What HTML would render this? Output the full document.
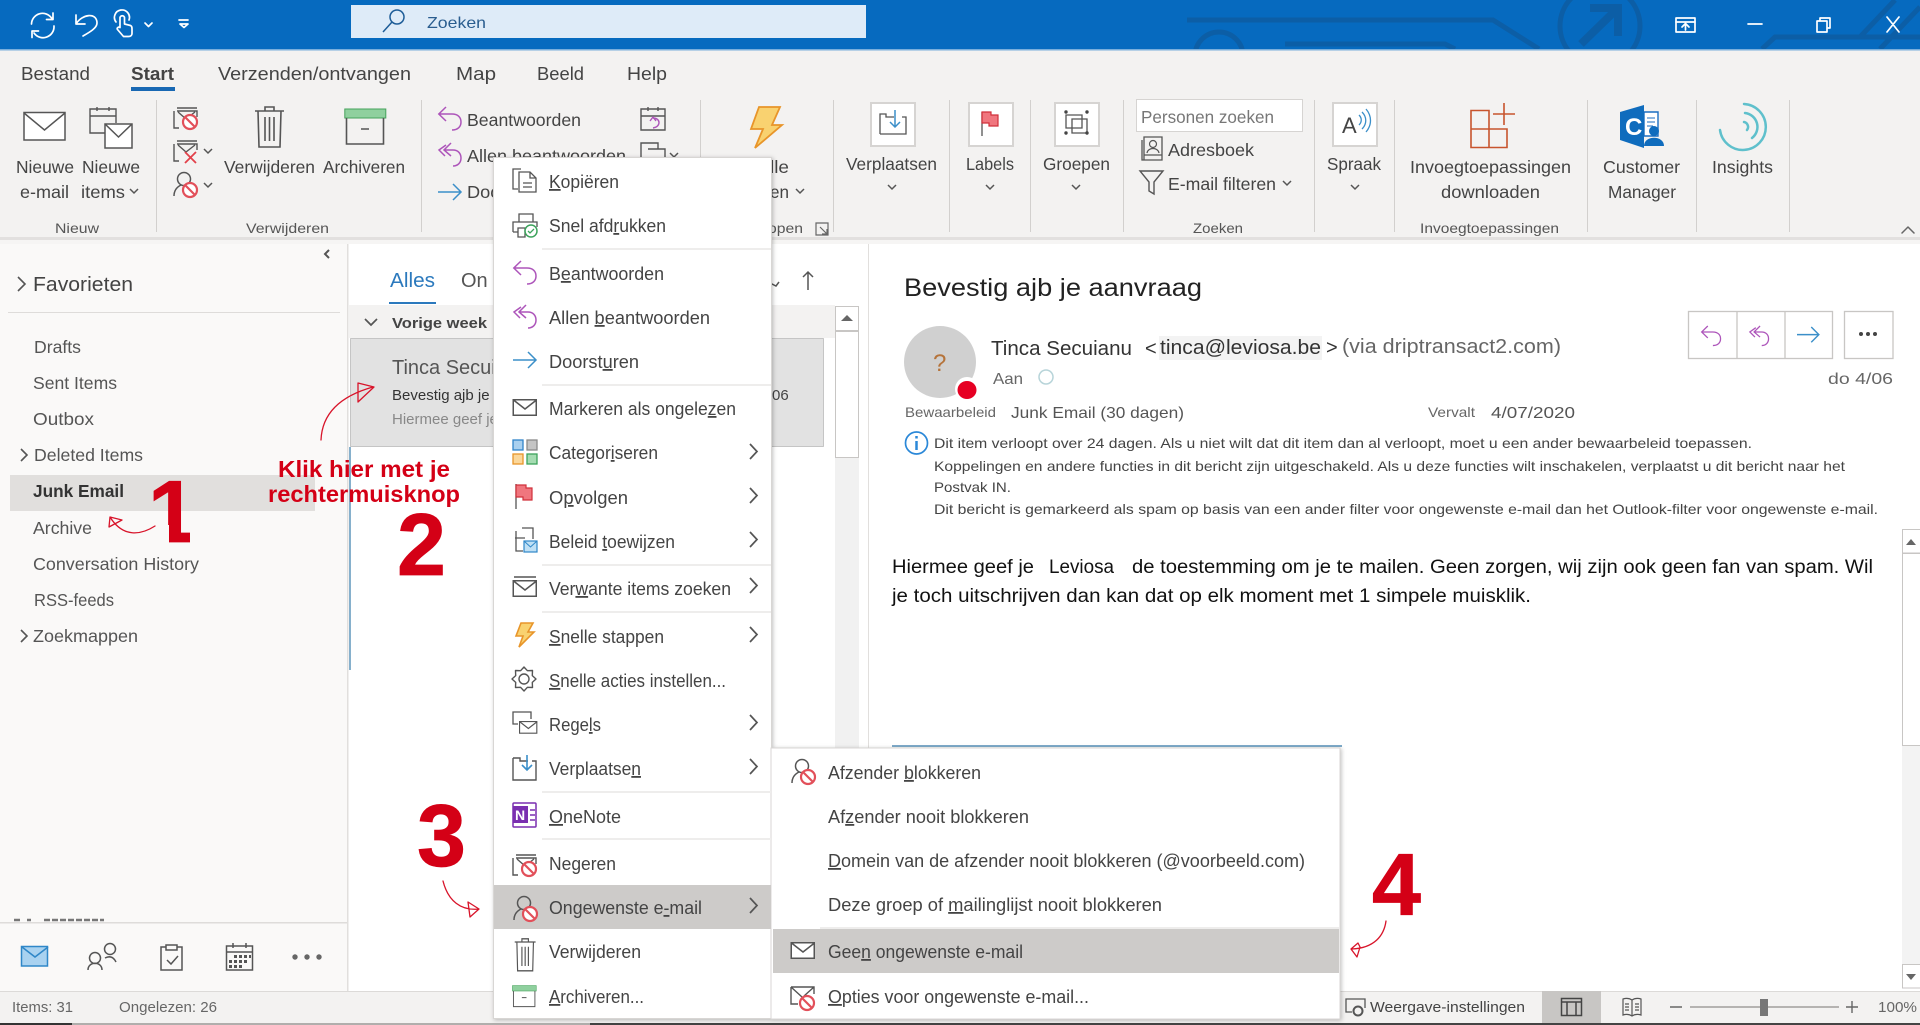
<!DOCTYPE html>
<html lang="nl"><head><meta charset="utf-8"><title>Outlook</title>
<style>
html,body{margin:0;padding:0;background:#fff;width:1920px;height:1025px;overflow:hidden}
svg{display:block;font-family:"Liberation Sans",sans-serif}
.r{font-size:17.5px;fill:#444}
.t{font-size:18px;fill:#444}
.g{font-size:14px;fill:#555}
.f{font-size:17.5px;fill:#555}
.m{font-size:18px;fill:#444}
.i{font-size:14px;fill:#444}
.s{font-size:15px;fill:#666}
.n{font-size:88px;font-weight:bold;fill:#d40016;stroke:#d40016;stroke-width:.8}
.k{font-size:23px;font-weight:bold;fill:#d40016}
.u{text-decoration:underline}
.ln{fill:none;stroke:#555;stroke-width:1.5}
.w{fill:none;stroke:#fff;stroke-width:1.7;stroke-linecap:round;stroke-linejoin:round}
.c{fill:none;stroke:#666;stroke-width:1.5;stroke-linecap:round;stroke-linejoin:round}
.ar{fill:none;stroke:#d8142a;stroke-width:1.3;stroke-linecap:round;stroke-linejoin:round}
</style></head><body>
<svg xmlns="http://www.w3.org/2000/svg" width="1920" height="1025" viewBox="0 0 1920 1025">
<defs>
<clipPath id="one"><path d="M140 470H190V545H169V525H140z"/></clipPath>
<g id="no"><circle cx="0" cy="0" r="7" fill="#fff" stroke="#e2505a" stroke-width="2.2"/><path d="M-5-5L5 5" stroke="#e2505a" stroke-width="2.2"/></g>
<g id="env"><rect x=".75" y=".75" width="23" height="15.5" fill="#fff" stroke="#555" stroke-width="1.5"/><path d="M1 1l11.5 9L24 1" fill="none" stroke="#555" stroke-width="1.5"/></g>
<g id="ignore"><path d="M4 2h20M1 5v17h5M4 5h20v6M5 6l8 7 9-7" fill="none" stroke="#555" stroke-width="1.4"/><use href="#no" x="17" y="16"/></g>
<g id="person"><circle cx="11" cy="8" r="6.5" fill="none" stroke="#555" stroke-width="1.5"/><path d="M1 25c0-6 3-9 7-11M14 14l3 2" fill="none" stroke="#555" stroke-width="1.5"/><use href="#no" x="17" y="19"/></g>
<g id="reply"><path d="M8 0L.8 7l7.2 7M1 7h13c6 0 9 3.5 9 8s-3 8-9 8" fill="none" stroke="#ad55ba" stroke-width="1.5"/></g>
<g id="replyall"><path d="M8 2L1 7l6 6M13 0L6 7l7 6M6 7h9c5 0 8 3.500 8 8s-3 8-8 8" fill="none" stroke="#ad55ba" stroke-width="1.5"/></g>
<g id="fwd"><path d="M0 8h23M15 0l8 8-8 8" fill="none" stroke="#3b8fc9" stroke-width="1.5"/></g>
<g id="trash"><path d="M1 5h29M11 5V1h9v4M4 5l1 36h21l1-36M11 11v24M15.500 11v24M20 11v24" fill="none" stroke="#555" stroke-width="1.6"/></g>
<g id="arch"><rect x=".8" y="1" width="41" height="9" fill="#8fd09e" stroke="#46a35c"/><path d="M2.500 10v26h37V10M17 21h8" fill="none" stroke="#555" stroke-width="1.6"/></g>
<g id="chv"><path d="M0 0l4 4 4-4" fill="none" stroke="#555" stroke-width="1.5"/></g>
<g id="chr"><path d="M0 0l7 7.500-7 7.500" fill="none" stroke="#555" stroke-width="1.7"/></g>
</defs>

<!-- title bar -->
<rect width="1920" height="49" fill="#066abf"/>
<g fill="none" stroke="#0c5ea6" stroke-width="5">
<path d="M1187 20H1456L1493 20 1539 49"/>
<circle cx="1600" cy="26" r="40"/>
<path d="M1581 44L1618 8M1590 8h28v28" stroke-width="8"/>
<circle cx="1219" cy="56" r="24"/>
<path d="M1285 44H1445L1455 49"/>
<path d="M1762 49L1775 37H1920M1860 37L1895 0M1880 49L1920 7"/>
</g>
<rect x="0" y="49" width="1920" height="1.500" fill="#79aedc"/>
<rect x="351" y="5" width="515" height="33" fill="#deebf8"/>
<circle cx="397" cy="17" r="7" fill="none" stroke="#1d5c97" stroke-width="1.5"/><path d="M392 22L383 32" stroke="#1d5c97" stroke-width="1.5"/>
<text x="427" y="28" font-size="16" fill="#2a5d8f" textLength="59" lengthAdjust="spacingAndGlyphs">Zoeken</text>
<path class="w" d="M31.500 24a11 11 0 0 1 20-6M53 13v6.500h-6.500M54 26a11 11 0 0 1-20 7M32 37.500V31h6.500"/>
<path class="w" d="M76 15v9h9M76 24c6-10 21-12 21-1 0 5-7 9-14 13"/>
<path class="w" d="M120 27V18a2.200 2.200 0 0 1 4.500 0v6l6 1.500c1.500.5 1.500 2 1.500 4v4c0 2-1.500 3-3.500 3h-5l-6-7c-1-1.500 1-3 2.500-2zM116 22a7.500 7.500 0 1 1 13-2"/>
<path class="w" d="M145 23l3.500 3.500 3.500-3.500"/>
<path class="w" d="M179 20h9M180 24l4 3.500 4-3.500h-8"/>
<g class="w" fill="none"><rect x="1676" y="18" width="19" height="14"/><path d="M1676 22h19M1685.500 30v-6M1682 27l3.500-3.500 3.500 3.500"/><path d="M1748 24h14M1817 21h10v11h-10zM1820 21v-3h10v10h-3M1887 17l12 15M1899 17l-12 15"/></g>

<!-- ribbon -->
<rect y="50.500" width="1920" height="187" fill="#f3f2f1"/>
<rect y="237" width="1920" height="3" fill="#e2e0df"/><rect y="240" width="1920" height="4" fill="#f6f5f4"/>
<text x="21" y="80" class="t" textLength="69" lengthAdjust="spacingAndGlyphs">Bestand</text>
<text x="131" y="80" class="t" font-weight="bold" style="font-weight:600" textLength="43" lengthAdjust="spacingAndGlyphs">Start</text>
<rect x="131" y="87" width="44" height="4" fill="#1868b3"/>
<text x="218" y="80" class="t" textLength="193" lengthAdjust="spacingAndGlyphs">Verzenden/ontvangen</text>
<text x="456" y="80" class="t" textLength="40" lengthAdjust="spacingAndGlyphs">Map</text>
<text x="537" y="80" class="t" textLength="47" lengthAdjust="spacingAndGlyphs">Beeld</text>
<text x="627" y="80" class="t" textLength="40" lengthAdjust="spacingAndGlyphs">Help</text>
<g fill="#d2d0ce"><rect x="156" y="100" width="1" height="132"/><rect x="421" y="100" width="1" height="132"/><rect x="700" y="100" width="1" height="132"/><rect x="833" y="100" width="1" height="132"/><rect x="949" y="100" width="1" height="132"/><rect x="1030" y="100" width="1" height="132"/><rect x="1123" y="100" width="1" height="132"/><rect x="1314" y="100" width="1" height="132"/><rect x="1394" y="100" width="1" height="132"/><rect x="1587" y="100" width="1" height="132"/><rect x="1696" y="100" width="1" height="132"/><rect x="1789" y="100" width="1" height="132"/></g>

<!-- nieuw -->
<rect x="24" y="112.500" width="41" height="27.500" fill="#fff" stroke="#555" stroke-width="1.500"/><path d="M24 113l20.500 17L65 113" fill="none" stroke="#555" stroke-width="1.500"/>
<path d="M105 133H90V109h26v14M90 116h26M97 107v4M109 107v4" fill="none" stroke="#555" stroke-width="1.400"/>
<rect x="105" y="124" width="27" height="24" fill="#fff" stroke="#555" stroke-width="1.500"/><path d="M105 124l13.500 13L132 124" fill="none" stroke="#555" stroke-width="1.500"/>
<text x="16" y="173" class="r" textLength="58" lengthAdjust="spacingAndGlyphs">Nieuwe</text><text x="20" y="198" class="r" textLength="49" lengthAdjust="spacingAndGlyphs">e-mail</text>
<text x="82" y="173" class="r" textLength="58" lengthAdjust="spacingAndGlyphs">Nieuwe</text><text x="81" y="198" class="r" textLength="44" lengthAdjust="spacingAndGlyphs">items</text>
<use href="#chv" x="130" y="189"/>
<text x="55" y="233" class="g" textLength="44" lengthAdjust="spacingAndGlyphs">Nieuw</text>
<!-- verwijderen -->
<use href="#ignore" x="173" y="106"/>
<g transform="translate(173 139)"><path d="M4 2h20M1 5v17h5M4 5h20v6M5 6l8 7 9-7" fill="none" stroke="#555" stroke-width="1.400"/><path d="M12 13l11 11M23 13L12 24" stroke="#e2404a" stroke-width="1.800"/></g>
<use href="#chv" x="204" y="149"/>
<use href="#person" x="173" y="171"/>
<use href="#chv" x="204" y="183"/>
<use href="#trash" x="254" y="106"/>
<use href="#arch" x="344" y="108"/>
<text x="224" y="173" class="r" textLength="91" lengthAdjust="spacingAndGlyphs">Verwijderen</text>
<text x="323" y="173" class="r" textLength="82" lengthAdjust="spacingAndGlyphs">Archiveren</text>
<text x="246" y="233" class="g" textLength="83" lengthAdjust="spacingAndGlyphs">Verwijderen</text>
<!-- reageren -->
<use href="#reply" x="438" y="107"/>
<use href="#replyall" x="438" y="143"/>
<use href="#fwd" x="438" y="184"/>
<text x="467" y="126" class="r" textLength="114" lengthAdjust="spacingAndGlyphs">Beantwoorden</text>
<text x="467" y="162" class="r" textLength="159" lengthAdjust="spacingAndGlyphs">Allen beantwoorden</text>
<text x="467" y="198" class="r" textLength="90" lengthAdjust="spacingAndGlyphs">Doorsturen</text>
<path d="M641 130V109h24v21zM641 116h24M648 107v4M658 107v4" fill="none" stroke="#555" stroke-width="1.400"/>
<path d="M650 121l3-4 3 4M653 118c8 0 8 9 0 10" fill="none" stroke="#ad55ba" stroke-width="1.400"/>
<path d="M641 160v-17h17v6M648 149h17v12" fill="none" stroke="#555" stroke-width="1.400"/>
<use href="#chv" x="670" y="153"/>
<!-- snelle stappen -->
<path d="M759 107h21l-8 18h10l-27 23 8-19h-12z" fill="#f9d270" stroke="#e8952a" stroke-width="1.800"/>
<text x="770" y="173" class="r" textLength="19" lengthAdjust="spacingAndGlyphs">lle</text>
<text x="770" y="198" class="r" textLength="19" lengthAdjust="spacingAndGlyphs">en</text>
<use href="#chv" x="796" y="189"/>
<text x="768" y="233" class="g" textLength="35" lengthAdjust="spacingAndGlyphs">open</text>
<path d="M816 223h12v12h-12zM820 227l7 7M827 229v5h-5" fill="none" stroke="#666" stroke-width="1.200"/>
<!-- verplaatsen/labels/groepen -->
<g fill="#fff" stroke="#d6d4d2" stroke-width="2"><rect x="871" y="103" width="44" height="43"/><rect x="969" y="103" width="44" height="43"/><rect x="1055" y="103" width="44" height="43"/><rect x="1333" y="103" width="44" height="43"/></g>
<path d="M880 134v-20h6v3h8M902 117h4v17H880" fill="none" stroke="#555" stroke-width="1.300"/><path d="M895 110v17M890 122l5 5 5-5" fill="none" stroke="#3b8fc9" stroke-width="1.500"/>
<text x="846" y="170" class="r" textLength="91" lengthAdjust="spacingAndGlyphs">Verplaatsen</text><use href="#chv" x="888" y="185"/>
<path d="M982 112v24" stroke="#555" stroke-width="1.300"/><path d="M982 112h9v3h7v11h-9v-3h-7z" fill="#f0767e" stroke="#d0313b" stroke-width="1.200"/>
<text x="966" y="170" class="r" textLength="48" lengthAdjust="spacingAndGlyphs">Labels</text><use href="#chv" x="986" y="185"/>
<path d="M1066 115h16v13h-16zM1072 119h15v14h-15z" fill="none" stroke="#555" stroke-width="1.300"/>
<g fill="#444"><circle cx="1066" cy="112" r="1.700"/><circle cx="1087" cy="112" r="1.700"/><circle cx="1066" cy="133" r="1.700"/><circle cx="1087" cy="133" r="1.700"/></g>
<text x="1043" y="170" class="r" textLength="67" lengthAdjust="spacingAndGlyphs">Groepen</text><use href="#chv" x="1072" y="185"/>
<!-- zoeken -->
<rect x="1136.500" y="99.500" width="166" height="32" fill="#fff" stroke="#d6d4d2"/>
<text x="1141" y="123" class="r" style="fill:#777" textLength="133" lengthAdjust="spacingAndGlyphs">Personen zoeken</text>
<path d="M1144 137h18v23h-18zM1144 155h18M1142 140v20h2" fill="none" stroke="#555" stroke-width="1.300"/><circle cx="1153" cy="144" r="3.500" fill="none" stroke="#555" stroke-width="1.200"/><path d="M1147 153c1-6 11-6 12 0" fill="none" stroke="#555" stroke-width="1.200"/>
<text x="1168" y="156" class="r" textLength="86" lengthAdjust="spacingAndGlyphs">Adresboek</text>
<path d="M1140 171h23l-9 11v12l-5-3v-9z" fill="none" stroke="#555" stroke-width="1.400"/>
<text x="1168" y="190" class="r" textLength="108" lengthAdjust="spacingAndGlyphs">E-mail filteren</text><use href="#chv" x="1283" y="181"/>
<text x="1193" y="233" class="g" textLength="50" lengthAdjust="spacingAndGlyphs">Zoeken</text>
<text x="1342" y="133" font-size="22" fill="#444">A</text><path d="M1359 114c3 3 3 7 0 10M1362 111c5 5 5 12 0 17M1366 108c6 7 6 16 0 23" transform="translate(0 1)" fill="none" stroke="#3b8fc9" stroke-width="1.300"/>
<text x="1327" y="170" class="r" textLength="54" lengthAdjust="spacingAndGlyphs">Spraak</text><use href="#chv" x="1351" y="185"/>
<!-- invoeg -->
<path d="M1471 110.500h18v37h-18zM1471 129h36v18.500h-18M1507 129v18.500M1489 129v18.500M1493 114h22M1504 103v22" fill="none" stroke="#c8542d" stroke-width="1.600"/>
<text x="1410" y="173" class="r" textLength="161" lengthAdjust="spacingAndGlyphs">Invoegtoepassingen</text>
<text x="1441" y="198" class="r" textLength="99" lengthAdjust="spacingAndGlyphs">downloaden</text>
<text x="1420" y="233" class="g" textLength="139" lengthAdjust="spacingAndGlyphs">Invoegtoepassingen</text>
<!-- customer manager -->
<path d="M1644 112h14v24h-14z" fill="#fff" stroke="#1b6ec2" stroke-width="1.400"/><path d="M1647 118h8M1647 122h8M1647 126h6" stroke="#1b6ec2"/>
<path d="M1620 112l24-7v43l-24-8z" fill="#0f6cbd"/><text x="1625" y="135" font-size="24" font-weight="bold" fill="#fff">C</text>
<circle cx="1654" cy="131" r="5" fill="#0f6cbd"/><path d="M1644 146c0-11 20-11 20 0z" fill="#0f6cbd"/>
<text x="1603" y="173" class="r" textLength="77" lengthAdjust="spacingAndGlyphs">Customer</text>
<text x="1608" y="198" class="r" textLength="68" lengthAdjust="spacingAndGlyphs">Manager</text>
<!-- insights -->
<path d="M1744 104a23 23 0 1 1-24 26M1745 113a14 14 0 0 1 7 25M1744 122a5 5 0 0 1 3 8" fill="none" stroke="#5fc0cc" stroke-width="2.500" stroke-linecap="round"/>
<text x="1712" y="173" class="r" textLength="61" lengthAdjust="spacingAndGlyphs">Insights</text>
<path class="c" d="M1902 233l6-6 6 6"/>

<!-- sidebar -->
<rect x="0" y="244" width="347" height="747" fill="#faf9f8"/>
<rect x="347" y="244" width="1.500" height="747" fill="#e1dfdd"/>
<path d="M329 250l-4 4 4 4" fill="none" stroke="#555" stroke-width="2"/>
<path d="M18 277l7 7-7 7" fill="none" stroke="#555" stroke-width="1.600"/>
<text x="33" y="291" font-size="20" fill="#444" textLength="100" lengthAdjust="spacingAndGlyphs">Favorieten</text>
<rect x="8" y="312" width="332" height="1" fill="#dedcda"/>
<rect x="10" y="475" width="305" height="36" fill="#e1dfdd"/>
<text x="34" y="353" class="f" textLength="47" lengthAdjust="spacingAndGlyphs">Drafts</text>
<text x="33" y="389" class="f" textLength="84" lengthAdjust="spacingAndGlyphs">Sent Items</text>
<text x="33" y="425" class="f" textLength="61" lengthAdjust="spacingAndGlyphs">Outbox</text>
<text x="34" y="461" class="f" textLength="109" lengthAdjust="spacingAndGlyphs">Deleted Items</text>
<text x="33" y="497" class="f" font-weight="bold" style="fill:#333" textLength="91" lengthAdjust="spacingAndGlyphs">Junk Email</text>
<text x="33" y="534" class="f" textLength="59" lengthAdjust="spacingAndGlyphs">Archive</text>
<text x="33" y="570" class="f" textLength="166" lengthAdjust="spacingAndGlyphs">Conversation History</text>
<text x="34" y="606" class="f" textLength="80" lengthAdjust="spacingAndGlyphs">RSS-feeds</text>
<text x="33" y="642" class="f" textLength="105" lengthAdjust="spacingAndGlyphs">Zoekmappen</text>
<path d="M21 449l6 6-6 6M21 630l6 6-6 6" fill="none" stroke="#555" stroke-width="1.600"/>
<path d="M14 920h7M27 920h4M44 920h60" stroke="#777" stroke-width="2.500" stroke-dasharray="6 2"/>
<rect x="0" y="922" width="347" height="1.500" fill="#dedcda"/>
<rect x="21.500" y="946.500" width="26" height="19.500" fill="#a9d2f0" stroke="#2f87c8" stroke-width="1.500"/><path d="M22 947l13 10 13-10" fill="none" stroke="#2f87c8" stroke-width="1.500"/>
<g fill="none" stroke="#555" stroke-width="1.500"><circle cx="95" cy="958" r="5.500"/><path d="M88 970c0-9 14-9 14 0"/><circle cx="110" cy="949" r="5.500"/><path d="M105 958c4-2 8-2 11 4"/>
<path d="M166 947h-5v23h21v-23h-5M166 945h11v5h-11zM167 960l4 4 7-8"/>
<rect x="226.500" y="946" width="26" height="24" /><path d="M227 952h26M233 943v5M246 943v5"/></g>
<g fill="#555"><rect x="234" y="955" width="3" height="3"/><rect x="239" y="955" width="3" height="3"/><rect x="244" y="955" width="3" height="3"/><rect x="249" y="955" width="2" height="3"/><rect x="234" y="960" width="3" height="3"/><rect x="239" y="960" width="3" height="3"/><rect x="244" y="960" width="3" height="3"/><rect x="229" y="960" width="3" height="3"/><rect x="229" y="965" width="3" height="3"/><rect x="234" y="965" width="3" height="3"/><rect x="239" y="965" width="3" height="3"/></g>
<g fill="#666"><circle cx="295" cy="957" r="2.700"/><circle cx="307" cy="957" r="2.700"/><circle cx="319" cy="957" r="2.700"/></g>

<!-- mail list -->
<rect x="868" y="244" width="1" height="747" fill="#e1dfdd"/>
<text x="390" y="287" font-size="20" fill="#2b79bd" textLength="45" lengthAdjust="spacingAndGlyphs">Alles</text>
<rect x="389" y="302" width="47" height="2" fill="#2b79bd"/>
<text x="461" y="287" font-size="20" fill="#555">On</text>
<rect x="349" y="305" width="486" height="33" fill="#f3f2f1"/>
<path d="M365 319l6 6 6-6" fill="none" stroke="#555" stroke-width="1.700"/>
<text x="392" y="328" font-size="15" font-weight="bold" fill="#444" textLength="95" lengthAdjust="spacingAndGlyphs">Vorige week</text>
<rect x="350.500" y="338.500" width="473" height="108" fill="#e2e2e2" stroke="#999" stroke-dasharray="1 1"/>
<text x="392" y="374" font-size="20" fill="#555">Tinca Secuianu</text>
<text x="392" y="400" font-size="15" fill="#333">Bevestig ajb je aanvraag</text>
<text x="392" y="424" font-size="15" fill="#888">Hiermee geef je</text>
<text x="772" y="400" font-size="15" fill="#444">06</text>
<rect x="349" y="447" width="2" height="223" fill="#86b0cc"/>
<path d="M770 283l6 3 3-4" fill="none" stroke="#555" stroke-width="1.500"/>
<path d="M808 290v-18M803 277l5-5 5 5" fill="none" stroke="#555" stroke-width="1.500"/>
<rect x="835" y="306" width="24" height="685" fill="#f1f1f1"/>
<rect x="835.500" y="306.500" width="23" height="24" fill="#fff" stroke="#c8c6c4"/><path d="M841 321l6-6 6 6z" fill="#666"/>
<rect x="835.500" y="331.500" width="23" height="126" fill="#fff" stroke="#c8c6c4"/>

<!-- reading pane -->
<text x="904" y="296" font-size="25" fill="#222" textLength="298" lengthAdjust="spacingAndGlyphs">Bevestig ajb je aanvraag</text>
<circle cx="940" cy="362" r="36" fill="#d0d0d0"/>
<text x="933" y="371" font-size="24" fill="#b5733a">?</text>
<circle cx="967" cy="389" r="12" fill="#fff"/><ellipse cx="967" cy="390" rx="9.500" ry="9" fill="#e60023"/>
<rect x="1159" y="336" width="163" height="24" fill="#f3f3f3"/>
<text x="991" y="355" font-size="20" fill="#333" textLength="141" lengthAdjust="spacingAndGlyphs">Tinca Secuianu</text>
<text x="1145" y="355" font-size="20" fill="#333">&lt;</text>
<text x="1160" y="354" font-size="20" fill="#333" textLength="161" lengthAdjust="spacingAndGlyphs">tinca@leviosa.be</text>
<text x="1326" y="354" font-size="20" fill="#333">&gt;</text>
<text x="1342" y="353" font-size="20" fill="#666" textLength="219" lengthAdjust="spacingAndGlyphs">(via driptransact2.com)</text>
<text x="993" y="384" font-size="16" fill="#666" textLength="30" lengthAdjust="spacingAndGlyphs">Aan</text>
<circle cx="1046" cy="377" r="7" fill="none" stroke="#b7d4d9" stroke-width="1.500"/>
<g fill="#fff" stroke="#c8c6c4" stroke-width="1.300"><rect x="1688.500" y="311.500" width="144" height="47"/><path d="M1737 311v48M1785 311v48" fill="none"/><rect x="1844.500" y="311.500" width="48.500" height="47"/></g>
<g transform="translate(1701 326) scale(.85)"><use href="#reply"/></g>
<g transform="translate(1749 326) scale(.85)"><use href="#replyall"/></g>
<g transform="translate(1797 327) scale(.95)"><use href="#fwd"/></g>
<g fill="#444"><circle cx="1861" cy="334" r="2"/><circle cx="1868" cy="334" r="2"/><circle cx="1875" cy="334" r="2"/></g>
<text x="1828" y="384" font-size="16" fill="#666" textLength="65" lengthAdjust="spacingAndGlyphs">do 4/06</text>
<text x="905" y="417" font-size="14" fill="#666" textLength="91" lengthAdjust="spacingAndGlyphs">Bewaarbeleid</text>
<text x="1011" y="418" font-size="16" fill="#555" textLength="173" lengthAdjust="spacingAndGlyphs">Junk Email (30 dagen)</text>
<text x="1428" y="417" font-size="14" fill="#666" textLength="47" lengthAdjust="spacingAndGlyphs">Vervalt</text>
<text x="1491" y="418" font-size="16" fill="#555" textLength="84" lengthAdjust="spacingAndGlyphs">4/07/2020</text>
<circle cx="916.500" cy="443" r="11" fill="none" stroke="#2b88d8" stroke-width="1.700"/><path d="M916.500 441v9M916.500 436v2.500" stroke="#2b88d8" stroke-width="2.500"/>
<text x="934" y="448" class="i" textLength="818" lengthAdjust="spacingAndGlyphs">Dit item verloopt over 24 dagen. Als u niet wilt dat dit item dan al verloopt, moet u een ander bewaarbeleid toepassen.</text>
<text x="934" y="471" class="i" textLength="911" lengthAdjust="spacingAndGlyphs">Koppelingen en andere functies in dit bericht zijn uitgeschakeld. Als u deze functies wilt inschakelen, verplaatst u dit bericht naar het</text>
<text x="934" y="492" class="i" textLength="77" lengthAdjust="spacingAndGlyphs">Postvak IN.</text>
<text x="934" y="514" class="i" textLength="944" lengthAdjust="spacingAndGlyphs">Dit bericht is gemarkeerd als spam op basis van een ander filter voor ongewenste e-mail dan het Outlook-filter voor ongewenste e-mail.</text>
<text x="892" y="573" font-size="19" fill="#111" textLength="142" lengthAdjust="spacingAndGlyphs">Hiermee geef je</text>
<text x="1049" y="573" font-size="19" fill="#111" textLength="65" lengthAdjust="spacingAndGlyphs">Leviosa</text>
<text x="1132" y="573" font-size="19" fill="#111" textLength="741" lengthAdjust="spacingAndGlyphs">de toestemming om je te mailen. Geen zorgen, wij zijn ook geen fan van spam. Wil</text>
<text x="892" y="602" font-size="19" fill="#111" textLength="639" lengthAdjust="spacingAndGlyphs">je toch uitschrijven dan kan dat op elk moment met 1 simpele muisklik.</text>
<rect x="1902" y="529" width="18" height="459" fill="#f3f3f3"/>
<rect x="1902.500" y="529.500" width="18" height="23.500" fill="#fff" stroke="#c8c6c4"/><path d="M1906 545l5-6 5 6z" fill="#666"/>
<rect x="1902.500" y="553.500" width="18" height="192" fill="#fff" stroke="#c8c6c4"/>
<rect x="1902.500" y="964.500" width="18" height="23.500" fill="#fff" stroke="#c8c6c4"/><path d="M1906 974l5 6 5-6z" fill="#666"/>
<rect x="892" y="745" width="450" height="2" fill="#7eabca"/>

<!-- status bar -->
<rect y="991" width="1920" height="32" fill="#f3f2f1"/><rect y="991" width="1920" height="1" fill="#dcdad8"/>
<rect y="1023" width="1920" height="2" fill="#b0aeac"/><rect y="1023" width="72" height="2" fill="#333"/><rect x="590" y="1023" width="1330" height="2" fill="#444"/>
<text x="12" y="1012" class="s" textLength="61" lengthAdjust="spacingAndGlyphs">Items: 31</text>
<text x="119" y="1012" class="s" textLength="98" lengthAdjust="spacingAndGlyphs">Ongelezen: 26</text>
<path d="M1352 1012h-6v-13h19v9" fill="none" stroke="#555" stroke-width="1.300"/><circle cx="1358" cy="1011" r="4.500" fill="none" stroke="#555" stroke-width="2"/>
<text x="1370" y="1012" class="s" style="fill:#444" textLength="155" lengthAdjust="spacingAndGlyphs">Weergave-instellingen</text>
<rect x="1542" y="991" width="59" height="32" fill="#c8c6c4"/>
<path d="M1561.500 998.500h20v17h-20zM1561.500 1002h20M1567 1002v13M1576 1002v13" fill="none" stroke="#444" stroke-width="1.500"/>
<path d="M1632 1000c-3-2-6-2-9-1v16c3-1 6-1 9 1 3-2 6-2 9-1v-16c-3-1-6-1-9 1zM1632 1000v16M1625 1004h4M1625 1007h4M1625 1010h4M1635 1004h4M1635 1007h4M1635 1010h4" fill="none" stroke="#555" stroke-width="1.200"/>
<path d="M1670 1007h12M1846 1007h12M1852 1001v12" stroke="#666" stroke-width="1.400"/>
<rect x="1690" y="1006" width="149" height="2" fill="#b5b3b1"/><rect x="1760" y="999" width="8" height="17" fill="#777"/>
<text x="1878" y="1012" class="s" textLength="39" lengthAdjust="spacingAndGlyphs">100%</text>

<!-- context menu -->
<g style="filter:drop-shadow(1px 1px 2px rgba(0,0,0,.25))">
<rect x="493.500" y="157.500" width="278" height="861" fill="#fff" stroke="#d8d6d4"/>
<rect x="771" y="748" width="569" height="271" fill="#fff" stroke="#d8d6d4"/>
</g>
<g fill="#eeedec"><rect x="542" y="248" width="229" height="2"/><rect x="542" y="384" width="229" height="2"/><rect x="542" y="564" width="229" height="2"/><rect x="542" y="611" width="229" height="2"/><rect x="542" y="791" width="229" height="2"/><rect x="542" y="838" width="229" height="2"/><rect x="820" y="927" width="519" height="2"/></g>
<rect x="494" y="885" width="277" height="44" fill="#cdcbc9"/>
<rect x="773" y="929" width="566" height="44" fill="#cdcbc9"/>

<text x="549" y="188" class="m" textLength="70" lengthAdjust="spacingAndGlyphs"><tspan class="u">K</tspan>opiëren</text>
<text x="549" y="232" class="m" textLength="117" lengthAdjust="spacingAndGlyphs">Snel afd<tspan class="u">r</tspan>ukken</text>
<text x="549" y="280" class="m" textLength="115" lengthAdjust="spacingAndGlyphs">B<tspan class="u">e</tspan>antwoorden</text>
<text x="549" y="324" class="m" textLength="161" lengthAdjust="spacingAndGlyphs">Allen <tspan class="u">b</tspan>eantwoorden</text>
<text x="549" y="368" class="m" textLength="90" lengthAdjust="spacingAndGlyphs">Doorst<tspan class="u">u</tspan>ren</text>
<text x="549" y="415" class="m" textLength="187" lengthAdjust="spacingAndGlyphs">Markeren als ongele<tspan class="u">z</tspan>en</text>
<text x="549" y="459" class="m" textLength="109" lengthAdjust="spacingAndGlyphs">Categor<tspan class="u">i</tspan>seren</text>
<text x="549" y="504" class="m" textLength="79" lengthAdjust="spacingAndGlyphs">O<tspan class="u">p</tspan>volgen</text>
<text x="549" y="548" class="m" textLength="126" lengthAdjust="spacingAndGlyphs">Beleid <tspan class="u">t</tspan>oewijzen</text>
<text x="549" y="595" class="m" textLength="182" lengthAdjust="spacingAndGlyphs">Ver<tspan class="u">w</tspan>ante items zoeken</text>
<text x="549" y="643" class="m" textLength="115" lengthAdjust="spacingAndGlyphs"><tspan class="u">S</tspan>nelle stappen</text>
<text x="549" y="687" class="m" textLength="177" lengthAdjust="spacingAndGlyphs"><tspan class="u">S</tspan>nelle acties instellen...</text>
<text x="549" y="731" class="m" textLength="52" lengthAdjust="spacingAndGlyphs">Rege<tspan class="u">l</tspan>s</text>
<text x="549" y="775" class="m" textLength="92" lengthAdjust="spacingAndGlyphs">Verplaatse<tspan class="u">n</tspan></text>
<text x="549" y="823" class="m" textLength="72" lengthAdjust="spacingAndGlyphs"><tspan class="u">O</tspan>neNote</text>
<text x="549" y="870" class="m" textLength="67" lengthAdjust="spacingAndGlyphs">Ne<tspan class="u">g</tspan>eren</text>
<text x="549" y="914" class="m" textLength="153" lengthAdjust="spacingAndGlyphs">Ongewenste e<tspan class="u">-</tspan>mail</text>
<text x="549" y="958" class="m" textLength="92" lengthAdjust="spacingAndGlyphs">Verwi<tspan class="u">j</tspan>deren</text>
<text x="549" y="1003" class="m" textLength="95" lengthAdjust="spacingAndGlyphs"><tspan class="u">A</tspan>rchiveren...</text>

<use href="#chr" x="750" y="444"/><use href="#chr" x="750" y="488"/><use href="#chr" x="750" y="532"/><use href="#chr" x="750" y="578"/><use href="#chr" x="750" y="627"/><use href="#chr" x="750" y="715"/><use href="#chr" x="750" y="759"/><use href="#chr" x="750" y="898"/>

<!-- menu icons -->
<path d="M521 169h-8v20h5M519 172h11l6 6v14h-17zM530 172v6h6M523 183h9M523 187h9" fill="none" stroke="#555" stroke-width="1.300"/>
<path d="M519 222v-8h14v8M513 232v-10h24v5M513 232h5M518 228h7v9h-7z" fill="none" stroke="#555" stroke-width="1.300"/><circle cx="531" cy="231" r="6" fill="#fff" stroke="#3da35c" stroke-width="1.500"/><path d="M528 231l2 2 4-4" fill="none" stroke="#3da35c" stroke-width="1.300"/>
<use href="#reply" x="513" y="261"/>
<use href="#replyall" x="513" y="305"/>
<use href="#fwd" x="513" y="352"/>
<use href="#env" x="512.500" y="399"/>
<g stroke-width="1.300"><rect x="513" y="440" width="10" height="10" fill="#a9d0ef" stroke="#3184c9"/><rect x="527" y="440" width="10" height="10" fill="#c4c4c4" stroke="#8a8a8a"/><rect x="513" y="454" width="10" height="10" fill="#fbd79a" stroke="#e8952a"/><rect x="527" y="454" width="10" height="10" fill="#a5dcb2" stroke="#3da35c"/></g>
<path d="M516 484v25" stroke="#555" stroke-width="1.300"/><path d="M516 485h10v3h6v12h-9v-3h-7z" fill="#f0767e" stroke="#d0313b" stroke-width="1.200"/>
<path d="M522 528h11v11M516 531v20h7M515 538h10" fill="none" stroke="#555" stroke-width="1.300"/><rect x="524" y="541" width="13" height="11" fill="#bfe0f5" stroke="#2f87c8" stroke-width="1.200"/><path d="M524 541l6.500 6 6.500-6" fill="none" stroke="#2f87c8"/>
<use href="#env" x="512.500" y="580"/><path d="M514 577h22" stroke="#555" stroke-width="1.500"/>
<path d="M521 623h12l-5 9h6l-15 15 4-11h-7z" fill="#f9d270" stroke="#e8952a" stroke-width="1.600"/>
<g transform="translate(524 679)" fill="none" stroke="#555" stroke-width="1.400" stroke-linejoin="round"><path d="M12 0L8.300 3.400 8.500 8.500 3.400 8.300 0 12-3.400 8.300-8.500 8.500-8.300 3.400-12 0-8.300-3.400-8.500-8.500-3.400-8.300 0-12 3.400-8.300 8.500-8.500 8.300-3.400z"/><circle r="5"/></g>
<path d="M513 715v-3h18v7M513 712v12h5" fill="none" stroke="#555" stroke-width="1.300"/><g transform="translate(519 721) scale(.75)"><use href="#env"/></g>
<path d="M513 758h7v3h8M532 761h4v19h-23v-22" fill="none" stroke="#555" stroke-width="1.400"/><path d="M527 755v15M522 765l5 5 5-5" fill="none" stroke="#3b8fc9" stroke-width="1.600"/>
<rect x="513" y="803" width="23" height="24" rx="1" fill="#fff" stroke="#7a2fb0" stroke-width="1.500"/><rect x="513" y="806" width="15" height="17" fill="#7a2fb0"/><text x="515" y="820" font-size="14" font-weight="bold" fill="#fff">N</text><path d="M530 810h5M530 815h5M530 820h5" stroke="#7a2fb0" stroke-width="1.500"/>
<use href="#ignore" x="512" y="853"/>
<use href="#person" x="513" y="895"/>
<g transform="translate(514 938) scale(.72 .8)"><use href="#trash"/></g>
<g transform="translate(512 985) scale(.58 .6)"><use href="#arch"/></g>

<!-- submenu -->
<text x="828" y="779" class="m" textLength="153" lengthAdjust="spacingAndGlyphs">Afzender <tspan class="u">b</tspan>lokkeren</text>
<text x="828" y="823" class="m" textLength="201" lengthAdjust="spacingAndGlyphs">Af<tspan class="u">z</tspan>ender nooit blokkeren</text>
<text x="828" y="867" class="m" textLength="477" lengthAdjust="spacingAndGlyphs"><tspan class="u">D</tspan>omein van de afzender nooit blokkeren (@voorbeeld.com)</text>
<text x="828" y="911" class="m" textLength="334" lengthAdjust="spacingAndGlyphs">Deze groep of <tspan class="u">m</tspan>ailinglijst nooit blokkeren</text>
<text x="828" y="958" class="m" textLength="195" lengthAdjust="spacingAndGlyphs">Gee<tspan class="u">n</tspan> ongewenste e-mail</text>
<text x="828" y="1003" class="m" textLength="261" lengthAdjust="spacingAndGlyphs"><tspan class="u">O</tspan>pties voor ongewenste e-mail...</text>
<use href="#person" x="791" y="758"/>
<g transform="translate(790.500 942)"><use href="#env"/></g>
<g transform="translate(790 986)"><path d="M1 1h23v7M1 1v17h7M1 1l11 10M24 1L14 10" fill="none" stroke="#555" stroke-width="1.400"/><use href="#no" x="17" y="17"/></g>

<!-- annotations -->
<text x="148" y="542" class="n" clip-path="url(#one)">1</text>
<text x="397" y="575" class="n">2</text>
<text x="417" y="866" class="n">3</text>
<text x="1372" y="915" class="n">4</text>
<text x="278" y="477" class="k" textLength="172" lengthAdjust="spacingAndGlyphs">Klik hier met je</text>
<text x="268" y="502" class="k" textLength="192" lengthAdjust="spacingAndGlyphs">rechtermuisknop</text>
<path class="ar" d="M155 526c-14 9-32 12-45-9M109 527l1-10 12 3z"/>
<path class="ar" d="M321 440c1-24 16-43 52-53M358 383l16 4-16 15z"/>
<path class="ar" d="M443 881c5 20 18 30 36 28M468 902l11 7-9 8z"/>
<path class="ar" d="M1386 921c-2 15-12 27-34 28M1358 943l-7 6 6 8 3-10z"/>
</svg>
</body></html>
